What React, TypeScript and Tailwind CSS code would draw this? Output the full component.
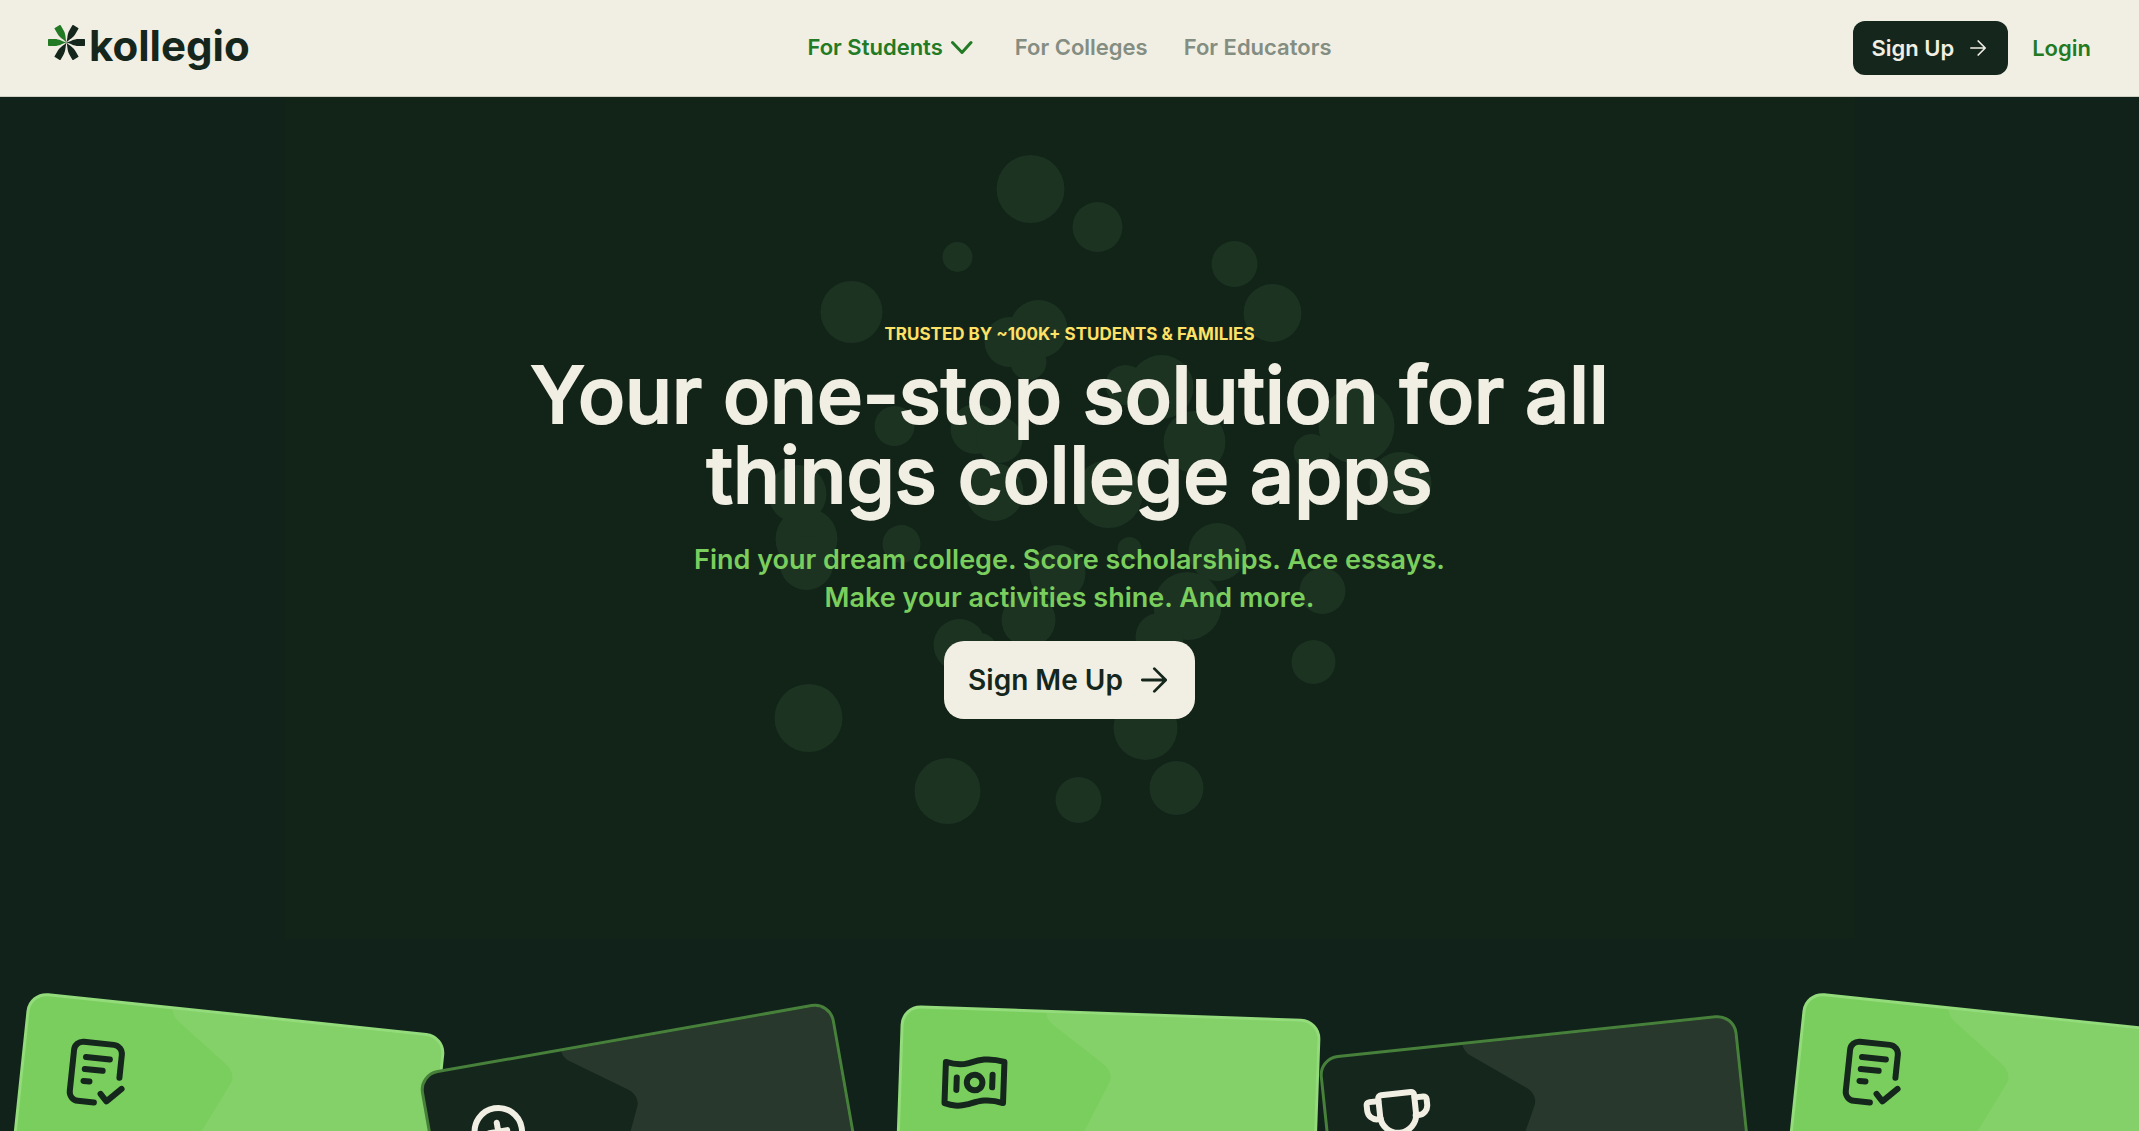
import type { ReactNode } from "react";

const bubbles: [number, number, number][] = [
  [1030, 189, 34], [1097, 227, 25], [957, 257, 15], [1234, 264, 23], [1272, 313, 29],
  [851, 312, 31], [1038, 329, 29], [1009, 342, 25], [1028, 362, 18], [894, 426, 20],
  [975, 429, 25], [999, 440, 23], [994, 492, 29], [1125, 385, 20], [1161, 387, 32],
  [1194, 442, 31], [1108, 494, 34], [1356, 426, 38], [1311, 452, 18], [1400, 483, 31],
  [797, 494, 29], [806, 539, 31], [806, 563, 27], [901, 544, 19], [1057, 573, 28],
  [1129, 549, 12], [1217, 552, 29], [1322, 591, 23], [1187, 606, 34], [1028, 620, 27],
  [1159, 637, 24], [959, 645, 26], [979, 651, 18], [1313, 662, 22], [808, 718, 34],
  [1145, 728, 32], [947, 791, 33], [1078, 800, 23], [1176, 788, 27],
];

function Bubbles() {
  return (
    <svg
      aria-hidden="true"
      viewBox="284 97 1571 842"
      className="absolute top-0 left-1/2 h-[842px] w-[1571px] max-w-none -translate-x-1/2 bg-[#122318]"
    >
      <g fill="#1c3322">
        {bubbles.map(([x, y, r]) => (
          <circle key={`${x}-${y}`} cx={x} cy={y} r={r} />
        ))}
      </g>
    </svg>
  );
}

function LogoMark() {
  const petal = "M18.5 17.5C14 18.6 11.5 21 6.5 21H0.7A0.7 0.7 0 0 1 0 20.3V14.7A0.7 0.7 0 0 1 0.7 14H6.5C11.5 14 14 16.4 18.5 17.5Z";
  return (
    <svg aria-hidden="true" viewBox="0 0 37 35" className="mb-2 h-[35px] w-[37px]">
      {[0, 60, 120, 180, 240, 300].map((angle) => (
        <path
          key={angle}
          d={petal}
          fill={angle < 120 ? "#237a24" : "#15261c"}
          transform={`rotate(${angle} 18.5 17.5)`}
        />
      ))}
    </svg>
  );
}

function Arrow({ className }: { className: string }) {
  return (
    <svg
      aria-hidden="true"
      viewBox="0 0 16 16"
      fill="none"
      stroke="currentColor"
      strokeWidth="1.7"
      strokeLinecap="round"
      strokeLinejoin="round"
      className={className}
    >
      <path d="M0.8 8H15M8.2 1L15.2 8L8.2 15" />
    </svg>
  );
}

function Header() {
  return (
    <header className="grid h-[97px] shrink-0 grid-cols-[1fr_auto_1fr] items-center border-b border-[#cdd0c3] bg-[#f1efe3] px-12 text-[22px] leading-7 font-semibold">
      <a href="#" className="flex items-center gap-1 pb-1 text-[#15261c]">
        <LogoMark />
        <span className="text-[42px] leading-[48px] font-bold">kollegio</span>
      </a>
      <nav className="flex items-center gap-9 pb-0.5 text-[#848d82]">
        <button type="button" className="flex items-center gap-2 text-[#237a24]">
          For Students
          <svg
            aria-hidden="true"
            viewBox="0 0 28 24"
            fill="none"
            stroke="currentColor"
            strokeWidth="3"
            strokeLinecap="round"
            strokeLinejoin="round"
            className="h-6 w-7"
          >
            <path d="M1.5 7.5L11 17.5L20 7.5" />
          </svg>
        </button>
        <a href="#">For Colleges</a>
        <a href="#">For Educators</a>
      </nav>
      <div className="flex items-center justify-end gap-6">
        <button
          type="button"
          className="flex h-[54px] items-center gap-4 rounded-xl bg-[#15261c] pr-[22px] pl-[18px] text-[#f1efe3]"
        >
          Sign Up
          <Arrow className="size-4" />
        </button>
        <a href="#" className="text-[#237a24]">
          Login
        </a>
      </div>
    </header>
  );
}

function Icon({ children }: { children: ReactNode }) {
  return (
    <svg
      aria-hidden="true"
      viewBox="0 0 24 24"
      fill="none"
      stroke="currentColor"
      strokeWidth="2"
      strokeLinecap="round"
      strokeLinejoin="round"
      className="relative size-[72px]"
    >
      {children}
    </svg>
  );
}

const essayIcon = (
  <Icon>
    <path d="M12.2 21.3H6.8a3 3 0 0 1-3-3V4.5a3 3 0 0 1 3-3h10a3 3 0 0 1 3 3v7.7" />
    <path d="M8 6.5h8M8 10.5h6M8 14.5h2M14.1 18.2l2.2 2.3 4.6-4.7" />
  </Icon>
);

const searchIcon = (
  <Icon>
    <circle cx="9.8" cy="10.4" r="7.9" />
    <path d="M6.8 10.4h6M9.8 7.4v6M15.6 16.2l5.4 5.4" />
  </Icon>
);

const cashIcon = (
  <Icon>
    <path d="M2.2 5.2C4.5 5.8 7 6.2 9.5 5.4S15.5 2.9 21.7 4.5V18.2C15.7 16.6 12.7 18.2 9.7 19.1S4.7 19.6 2.2 18.9Z" />
    <circle cx="12" cy="11.7" r="2.6" />
    <path d="M6 10.2v4.2M17.9 8.9v4.2" />
  </Icon>
);

const trophyIcon = (
  <Icon>
    <path d="M6.3 1.5h10a1 1 0 0 1 1 1V8.6a6 6 0 0 1-12 0V2.5a1 1 0 0 1 1-1Z" />
    <path d="M5.2 3.4H2.2a1 1 0 0 0-1 1V6.2a3.2 3.2 0 0 0 3.2 3.2h1M17.4 3.4h2.9a1 1 0 0 1 1 1V6.2a3.2 3.2 0 0 1-3.2 3.2h-1M11.3 15v5M7 21.5h9" />
  </Icon>
);

const green = "border-[#93db7b] bg-[#7ace5e] text-[#15261c]";
const dark = "mt-[22px] border-[#47803a] bg-[#15261c] text-[#f1efe3]";

const cards = [
  { id: "essays", look: green, tilt: "rotate-6", icon: essayIcon },
  { id: "search", look: dark, tilt: "-rotate-10", icon: searchIcon },
  { id: "scholarships", look: green, tilt: "rotate-2", icon: cashIcon },
  { id: "activities", look: dark, tilt: "-rotate-6", icon: trophyIcon },
  { id: "essays-repeat", look: green, tilt: "rotate-6", icon: essayIcon },
];

function FeatureCards() {
  return (
    <ul className="flex gap-6 pl-1.5">
      {cards.map(({ id, look, tilt, icon }) => (
        <li
          key={id}
          className={`relative h-[410px] w-[420px] shrink-0 overflow-hidden rounded-[20px] border-[3px] p-[37px] ${look} ${tilt}`}
        >
          <svg
            aria-hidden="true"
            viewBox="3 3 414 404"
            className="absolute inset-0 size-full"
          >
            <path
              d="M145 0C145 8 149 12 153 15L204 52C211 57 214 65 210 72L140 220L280 410H420V0Z"
              fill="#f1efe3"
              fillOpacity="0.09"
            />
          </svg>
          {icon}
        </li>
      ))}
    </ul>
  );
}

export default function App() {
  return (
    <div className="flex h-screen flex-col overflow-hidden bg-[#11221a] font-['Inter',sans-serif]">
      <Header />
      <main className="relative">
        <Bubbles />
        <section className="relative flex flex-col items-center pt-[222px] text-center">
          <p className="text-[17px] leading-[30px] font-bold text-[#ffe165] uppercase">
            Trusted by ~100k+ students &amp; families
          </p>
          <h1 className="mt-1.5 text-[78px] leading-[80px] font-medium text-[#f1efe3] [-webkit-text-stroke:2px_#f1efe3]">
            Your one-stop solution for all
            <br />
            things college apps
          </h1>
          <p className="mt-[26px] text-[27px] leading-[38px] font-semibold text-[#7ace5e]">
            Find your dream college. Score scholarships. Ace essays.
            <br />
            Make your activities shine. And more.
          </p>
          <button
            type="button"
            className="mt-6 flex h-[78px] items-center gap-[18px] rounded-[20px] bg-[#f1efe3] pr-7 pl-6 text-[28px] leading-9 font-semibold text-[#15261c]"
          >
            Sign Me Up
            <Arrow className="size-[26px]" />
          </button>
        </section>
        <div className="relative mt-[293px]">
          <FeatureCards />
        </div>
      </main>
    </div>
  );
}
